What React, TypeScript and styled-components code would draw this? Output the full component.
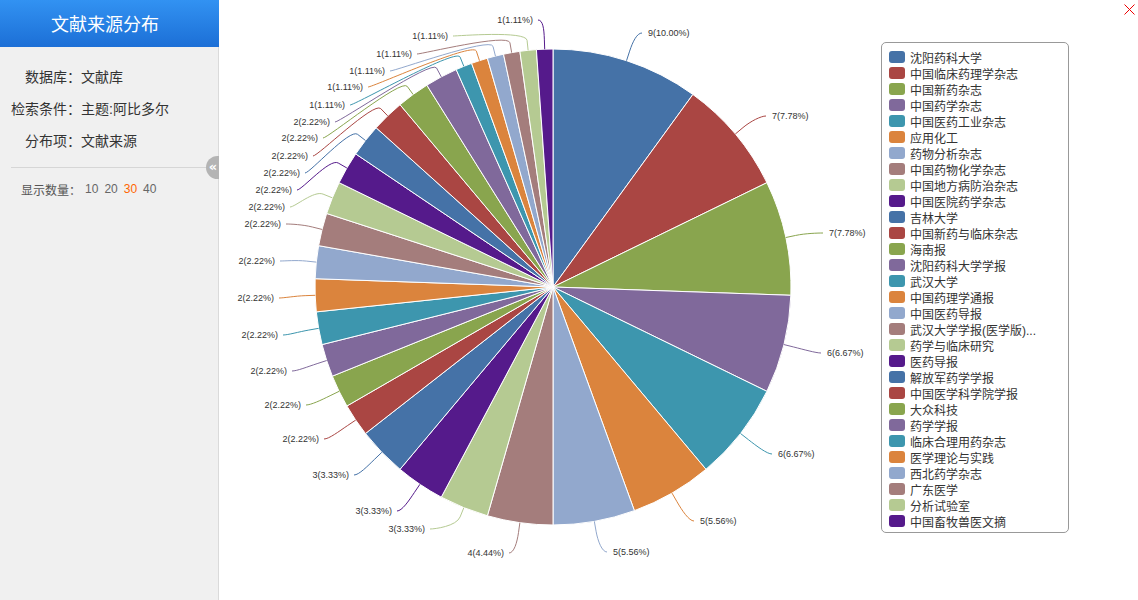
import React from "react";
import styled, { createGlobalStyle } from "styled-components";

const GlobalStyle = createGlobalStyle`
  html, body {
    margin: 0;
    padding: 0;
    background: #fff;
  }
  body {
    font-family: "Liberation Sans", "Noto Sans CJK SC", sans-serif;
  }
`;

const Page = styled.div`
  position: relative;
  display: flex;
  align-items: flex-start;
  width: 1138px;
  height: 600px;
  overflow: hidden;
`;

const Sidebar = styled.aside`
  position: relative;
  flex: none;
  width: 219px;
  height: 600px;
  background: #f0f0f0;
  box-shadow: inset -1px 0 0 #dadada;
`;

const Header = styled.h1`
  margin: 0;
  height: 47px;
  padding-right: 9px;
  line-height: 46px;
  text-align: center;
  color: #fff;
  font-size: 18px;
  font-weight: normal;
  font-family: "Noto Sans CJK SC", sans-serif;
  background: linear-gradient(#3292f2, #1c6fd6);
`;

const InfoList = styled.dl`
  display: grid;
  grid-template-columns: 70px auto;
  grid-auto-rows: 32px;
  align-items: center;
  margin: 13px 0 0 11px;
  font-size: 14px;
  color: #333;
`;

const InfoLabel = styled.dt`
  margin: 0;
  text-align: right;
  white-space: nowrap;
`;

const InfoValue = styled.dd`
  margin: 0;
  white-space: nowrap;
`;

const Divider = styled.hr`
  margin: 11px 0 0 11px;
  border: 0;
  border-top: 1px solid #d6d6d6;
`;

const CountRow = styled.div`
  display: flex;
  align-items: center;
  margin-top: 13px;
  padding-left: 21px;
  height: 16px;
  font-size: 12px;
  color: #555;
`;

const CountOption = styled.span<{ $active?: boolean }>`
  margin-left: 6px;
  color: ${(p) => (p.$active ? "#f60" : "#666")};
  cursor: pointer;
  &:first-of-type {
    margin-left: 4px;
  }
`;

const CollapseTab = styled.div`
  position: absolute;
  top: 156px;
  right: 0;
  width: 13px;
  height: 23px;
  padding-left: 1px;
  box-sizing: border-box;
  border-radius: 12px 0 0 12px;
  background: #b4b4b4;
  color: #fff;
  font-family: "DejaVu Sans", sans-serif;
  font-size: 13px;
  font-weight: bold;
  line-height: 22px;
  text-align: center;
  cursor: pointer;
`;

const ChartSvg = styled.svg`
  display: block;
  flex: none;
  width: 660px;
  height: 600px;
`;

const LabelText = styled.text`
  font-family: "Liberation Sans", sans-serif;
  font-size: 9px;
  fill: #333;
`;

const Legend = styled.ul`
  list-style: none;
  margin: 42px 0 0 2px;
  padding: 6px 0 3px 7px;
  width: 179px;
  box-sizing: content-box;
  border: 1px solid #999;
  border-radius: 5px;
`;

const LegendItem = styled.li`
  display: flex;
  align-items: center;
  height: 16px;
  font-size: 12px;
  color: #333;
  white-space: nowrap;
`;

const Swatch = styled.span<{ $color: string }>`
  flex: none;
  width: 16px;
  height: 12px;
  margin-right: 5px;
  border-radius: 3px;
  background: ${(p) => p.$color};
`;

const CloseButton = styled.svg`
  position: absolute;
  top: 4px;
  right: 3px;
  width: 11px;
  height: 11px;
  cursor: pointer;
`;

const COLORS = [
  "#4572A7",
  "#AA4643",
  "#89A54E",
  "#80699B",
  "#3D96AE",
  "#DB843D",
  "#92A8CD",
  "#A47D7C",
  "#B5CA92",
  "#551A8B",
];

type Side = "r" | "l";

// name, count, label side, label x (start on the right, end on the left), label y
const SOURCES: [string, number, Side, number, number][] = [
  ["沈阳药科大学", 9, "r", 648, 33],
  ["中国临床药理学杂志", 7, "r", 772, 116],
  ["中国新药杂志", 7, "r", 829, 233],
  ["中国药学杂志", 6, "r", 827, 353],
  ["中国医药工业杂志", 6, "r", 778, 454],
  ["应用化工", 5, "r", 700, 521],
  ["药物分析杂志", 5, "r", 613, 552],
  ["中国药物化学杂志", 4, "l", 504, 553],
  ["中国地方病防治杂志", 3, "l", 425, 529],
  ["中国医院药学杂志", 3, "l", 392, 511],
  ["吉林大学", 3, "l", 349, 475],
  ["中国新药与临床杂志", 2, "l", 319, 439],
  ["海南报", 2, "l", 301, 405],
  ["沈阳药科大学学报", 2, "l", 287, 371],
  ["武汉大学", 2, "l", 278, 335],
  ["中国药理学通报", 2, "l", 274, 298],
  ["中国医药导报", 2, "l", 275, 261],
  ["武汉大学学报(医学版)...", 2, "l", 281, 224],
  ["药学与临床研究", 2, "l", 285, 207],
  ["医药导报", 2, "l", 292, 190],
  ["解放军药学学报", 2, "l", 300, 173],
  ["中国医学科学院学报", 2, "l", 308, 156],
  ["大众科技", 2, "l", 318, 138],
  ["药学学报", 2, "l", 330, 122],
  ["临床合理用药杂志", 1, "l", 345, 105],
  ["医学理论与实践", 1, "l", 363, 87],
  ["西北药学杂志", 1, "l", 385, 71],
  ["广东医学", 1, "l", 412, 54],
  ["分析试验室", 1, "l", 448, 36],
  ["中国畜牧兽医文摘", 1, "l", 533, 20],
];

const CX = 553;
const CY = 287;
const R = 238;
const TOTAL = SOURCES.reduce((s, d) => s + d[1], 0);

const at = (angle: number, r: number) => ({
  x: CX + r * Math.sin(angle),
  y: CY - r * Math.cos(angle),
});

const slicePath = (a0: number, a1: number) => {
  const p0 = at(a0, R);
  const p1 = at(a1, R);
  const large = a1 - a0 > Math.PI ? 1 : 0;
  return `M${CX} ${CY} L${p0.x} ${p0.y} A${R} ${R} 0 ${large} 1 ${p1.x} ${p1.y} Z`;
};

const connectorPath = (mid: number, side: Side, tx: number, ty: number) => {
  const edge = at(mid, R);
  const brk = at(mid, R + 10);
  const ctl = at(mid, R + 20);
  const mx = side === "r" ? tx - 6 : tx + 5;
  const x1 = side === "r" ? mx - 5 : mx + 5;
  return `M${mx} ${ty} C${x1} ${ty} ${ctl.x} ${ctl.y} ${brk.x} ${brk.y} L${edge.x} ${edge.y}`;
};

const PieChart = () => {
  let acc = 0;
  const slices = SOURCES.map(([name, value, side, tx, ty], i) => {
    const a0 = (acc / TOTAL) * Math.PI * 2;
    acc += value;
    const a1 = (acc / TOTAL) * Math.PI * 2;
    return { name, value, side, tx, ty, a0, a1, color: COLORS[i % COLORS.length] };
  });

  return (
    <ChartSvg viewBox="219 0 660 600">
      {slices.map((s) => (
        <path
          key={s.name}
          d={slicePath(s.a0, s.a1)}
          fill={s.color}
          stroke="#fff"
          strokeWidth={1}
          strokeLinejoin="round"
        />
      ))}
      {slices.map((s) => (
        <g key={s.name + "-label"}>
          <path
            d={connectorPath((s.a0 + s.a1) / 2, s.side, s.tx, s.ty)}
            fill="none"
            stroke={s.color}
            strokeWidth={1}
          />
          <LabelText x={s.tx} y={s.ty + 3} textAnchor={s.side === "r" ? "start" : "end"}>
            {`${s.value}(${((s.value / TOTAL) * 100).toFixed(2)}%)`}
          </LabelText>
        </g>
      ))}
    </ChartSvg>
  );
};

const App = () => {
  return (
    <>
      <GlobalStyle />
      <Page>
        <Sidebar>
          <Header>文献来源分布</Header>
          <InfoList>
            <InfoLabel>数据库：</InfoLabel>
            <InfoValue>文献库</InfoValue>
            <InfoLabel>检索条件：</InfoLabel>
            <InfoValue>主题:阿比多尔</InfoValue>
            <InfoLabel>分布项：</InfoLabel>
            <InfoValue>文献来源</InfoValue>
          </InfoList>
          <Divider />
          <CountRow>
            显示数量：
            <CountOption>10</CountOption>
            <CountOption>20</CountOption>
            <CountOption $active>30</CountOption>
            <CountOption>40</CountOption>
          </CountRow>
          <CollapseTab>«</CollapseTab>
        </Sidebar>

        <PieChart />

        <Legend>
          {SOURCES.map(([name], i) => (
            <LegendItem key={name}>
              <Swatch $color={COLORS[i % COLORS.length]} />
              {name}
            </LegendItem>
          ))}
        </Legend>

        <CloseButton viewBox="0 0 11 11">
          <path d="M0.5 0.5 L10.5 10.5 M10.5 0.5 L0.5 10.5" stroke="#e00" strokeWidth={1} />
        </CloseButton>
      </Page>
    </>
  );
};

export default App;
